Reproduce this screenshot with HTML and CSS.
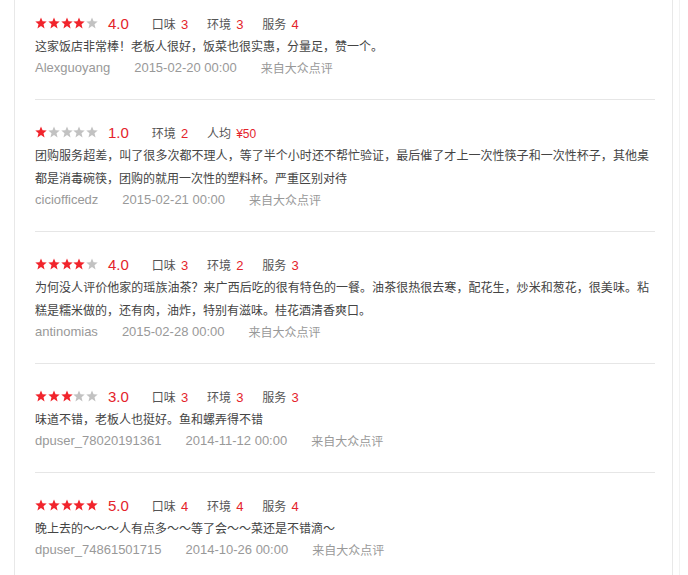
FILE: index.html
```
<!DOCTYPE html>
<html lang="zh-CN">
<head>
	<meta charset="UTF-8">
	<meta name="viewport" content="width=device-width, initial-scale=1.0">
	<title>点评列表</title>
	<link rel="stylesheet" href="styles.css">
</head>
<body>

<svg class="defs" width="0" height="0">
	<symbol id="star" viewBox="0 0 12 12">
		<polygon points="6,0.4 7.55,4.25 11.7,4.5 8.5,7.15 9.55,11.4 6,9.1 2.45,11.4 3.5,7.15 0.3,4.5 4.45,4.25"/>
	</symbol>
</svg>

<div class="page">
<div class="reviews">

	<div class="review">
		<div class="rating">
			<span class="stars">
				<svg class="star on"><use href="#star"/></svg><svg class="star on"><use href="#star"/></svg><svg class="star on"><use href="#star"/></svg><svg class="star on"><use href="#star"/></svg><svg class="star"><use href="#star"/></svg>
			</span>
			<span class="score">4.0</span>
			<span class="item">口味<em>3</em></span>
			<span class="item">环境<em>3</em></span>
			<span class="item">服务<em>4</em></span>
		</div>
		<p class="content">这家饭店非常棒！老板人很好，饭菜也很实惠，分量足，赞一个。</p>
		<div class="meta">
			<span class="user">Alexguoyang</span>
			<span class="time">2015-02-20 00:00</span>
			<span class="from">来自大众点评</span>
		</div>
	</div>

	<div class="review">
		<div class="rating">
			<span class="stars">
				<svg class="star on"><use href="#star"/></svg><svg class="star"><use href="#star"/></svg><svg class="star"><use href="#star"/></svg><svg class="star"><use href="#star"/></svg><svg class="star"><use href="#star"/></svg>
			</span>
			<span class="score">1.0</span>
			<span class="item">环境<em>2</em></span>
			<span class="item">人均<em class="price">¥50</em></span>
		</div>
		<p class="content">团购服务超差，叫了很多次都不理人，等了半个小时还不帮忙验证，最后催了才上一次性筷子和一次性杯子，其他桌都是消毒碗筷，团购的就用一次性的塑料杯。严重区别对待</p>
		<div class="meta">
			<span class="user">ciciofficedz</span>
			<span class="time">2015-02-21 00:00</span>
			<span class="from">来自大众点评</span>
		</div>
	</div>

	<div class="review">
		<div class="rating">
			<span class="stars">
				<svg class="star on"><use href="#star"/></svg><svg class="star on"><use href="#star"/></svg><svg class="star on"><use href="#star"/></svg><svg class="star on"><use href="#star"/></svg><svg class="star"><use href="#star"/></svg>
			</span>
			<span class="score">4.0</span>
			<span class="item">口味<em>3</em></span>
			<span class="item">环境<em>2</em></span>
			<span class="item">服务<em>3</em></span>
		</div>
		<p class="content">为何没人评价他家的瑶族油茶？来广西后吃的很有特色的一餐。油茶很热很去寒，配花生，炒米和葱花，很美味。粘糕是糯米做的，还有肉，油炸，特别有滋味。桂花酒清香爽口。</p>
		<div class="meta">
			<span class="user">antinomias</span>
			<span class="time">2015-02-28 00:00</span>
			<span class="from">来自大众点评</span>
		</div>
	</div>

	<div class="review">
		<div class="rating">
			<span class="stars">
				<svg class="star on"><use href="#star"/></svg><svg class="star on"><use href="#star"/></svg><svg class="star on"><use href="#star"/></svg><svg class="star"><use href="#star"/></svg><svg class="star"><use href="#star"/></svg>
			</span>
			<span class="score">3.0</span>
			<span class="item">口味<em>3</em></span>
			<span class="item">环境<em>3</em></span>
			<span class="item">服务<em>3</em></span>
		</div>
		<p class="content">味道不错，老板人也挺好。鱼和螺弄得不错</p>
		<div class="meta">
			<span class="user">dpuser_78020191361</span>
			<span class="time">2014-11-12 00:00</span>
			<span class="from">来自大众点评</span>
		</div>
	</div>

	<div class="review">
		<div class="rating">
			<span class="stars">
				<svg class="star on"><use href="#star"/></svg><svg class="star on"><use href="#star"/></svg><svg class="star on"><use href="#star"/></svg><svg class="star on"><use href="#star"/></svg><svg class="star on"><use href="#star"/></svg>
			</span>
			<span class="score">5.0</span>
			<span class="item">口味<em>4</em></span>
			<span class="item">环境<em>4</em></span>
			<span class="item">服务<em>4</em></span>
		</div>
		<p class="content">晚上去的～～～人有点多～～等了会～～菜还是不错滴～</p>
		<div class="meta">
			<span class="user">dpuser_74861501715</span>
			<span class="time">2014-10-26 00:00</span>
			<span class="from">来自大众点评</span>
		</div>
	</div>

</div>
</div>

</body>
</html>
```

FILE: styles.css
```
body {
	margin: 0;
	font-family: "Liberation Sans", "Noto Sans CJK SC", sans-serif;
	font-size: 12px;
	color: #444;
	background: #fff;
}
.defs {
	position: absolute;
	width: 0;
	height: 0;
}
.page {
	width: 679px;
	min-height: 100vh;
	border-right: 1px solid #f2f2f2;
}
.reviews {
	margin-left: 14px;
	width: 620px;
	min-height: 100vh;
	padding: 0 17px 0 20px;
	border-left: 1px solid #e8e8e8;
	border-right: 1px solid #e8e8e8;
}
.review {
	padding: 21px 0 21px 0;
	border-bottom: 1px solid #e6e6e6;
}
.review:first-child {
	padding-top: 12px;
}
.rating {
	display: flex;
	align-items: center;
	height: 22px;
	color: #555;
}
.stars {
	display: flex;
	gap: 0.75px;
	margin-right: 10px;
}
.star {
	width: 12px;
	height: 12px;
	fill: #c2c2c2;
}
.star.on {
	fill: #f1242c;
}
.score {
	font-size: 15px;
	color: #e4232b;
	margin-right: 23px;
}
.item {
	margin-right: 19px;
}
.item em {
	font-style: normal;
	font-size: 13px;
	color: #e4232b;
	margin-left: 5px;
}
.item em.price {
	font-size: 12px;
}
.content {
	margin: 0;
	max-width: 614px;
	font-family: "Noto Sans CJK SC", sans-serif;
	line-height: 23px;
	text-align: justify;
	color: #444;
}
.meta {
	display: flex;
	align-items: center;
	gap: 24px;
	height: 21px;
	color: #999;
}
.user, .time {
	font-size: 13px;
}
```
